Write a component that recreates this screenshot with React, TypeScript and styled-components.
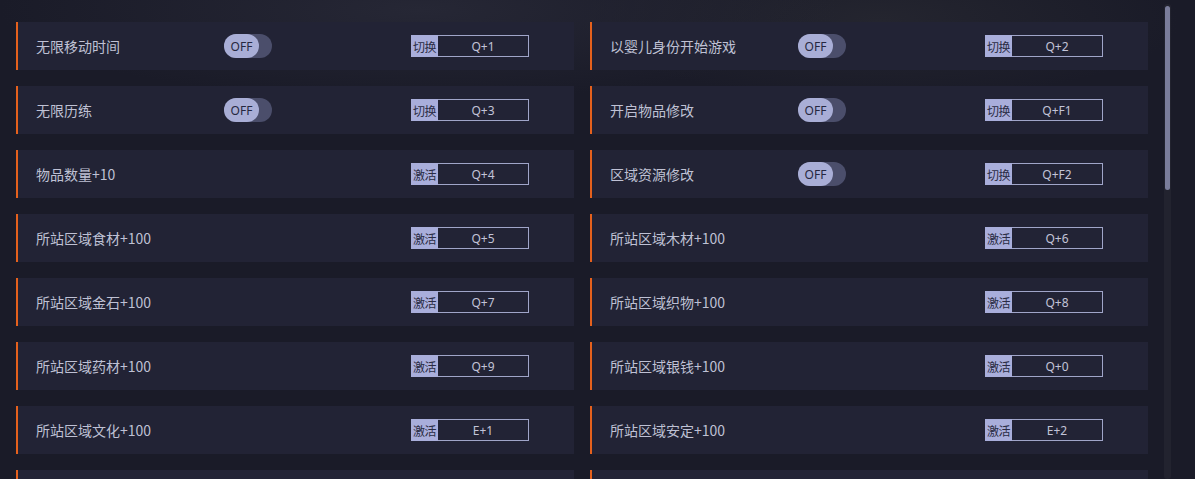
import React from "react";
import styled, { createGlobalStyle } from "styled-components";

const GlobalStyle = createGlobalStyle`
  html, body {
    margin: 0;
    padding: 0;
    background: #1a1b28;
    overflow: hidden;
  }
  body {
    font-family: "Noto Sans CJK SC", "Noto Sans", sans-serif;
  }
`;

const Page = styled("div")`
  position: relative;
  width: 1195px;
  height: 479px;
  overflow: hidden;
  background: radial-gradient(ellipse 420px 90px at 420px 10px, #262735 0%, rgba(26, 27, 40, 0) 100%),
    radial-gradient(ellipse 300px 80px at 880px 20px, #24252f 0%, rgba(26, 27, 40, 0) 100%),
    #1a1b28;
`;

const List = styled("div")`
  display: grid;
  grid-template-columns: 558px 558px;
  column-gap: 16px;
  row-gap: 16px;
  padding: 22px 0 0 16px;
`;

const Row = styled("div")`
  height: 48px;
  display: flex;
  align-items: center;
  background: #222335;
  border-left: 2px solid #e5611d;
  box-sizing: border-box;
`;

const Label = styled("div")`
  width: 188px;
  padding-left: 18px;
  font-size: 14px;
  color: #bfc1d4;
  white-space: nowrap;
`;

const ToggleSlot = styled("div")`
  width: 187px;
  display: flex;
  align-items: center;
`;

const Toggle = styled("div")`
  width: 48px;
  height: 24px;
  border-radius: 12px;
  background: #4b4e6b;
  display: flex;
  align-items: center;
`;

const Knob = styled("div")`
  width: 35px;
  height: 24px;
  border-radius: 12px;
  background: #a9aed6;
  color: #262840;
  font-family: "Noto Sans", sans-serif;
  font-size: 12px;
  display: flex;
  align-items: center;
  justify-content: center;
`;

const Hotkey = styled("div")`
  display: flex;
  height: 22px;
  width: 118px;
`;

const HotkeyType = styled("div")`
  width: 27px;
  background: #a9aedb;
  color: #2a2c44;
  font-size: 12px;
  display: flex;
  align-items: center;
  justify-content: center;
  letter-spacing: -0.5px;
`;

const HotkeyKeys = styled("div")`
  flex: 1;
  border: 1px solid #a0a5c9;
  border-left: none;
  color: #c2c4d8;
  font-family: "Noto Sans", sans-serif;
  font-size: 12px;
  display: flex;
  align-items: center;
  justify-content: center;
  box-sizing: border-box;
`;

const ScrollTrack = styled("div")`
  position: absolute;
  top: 4px;
  right: 24px;
  width: 7px;
  height: 475px;
  background: #22232f;
  border-radius: 3px;
`;

const ScrollThumb = styled("div")`
  margin: 2px auto 0;
  width: 5px;
  height: 184px;
  border-radius: 3px;
  background: #7a7d9b;
`;

type Item = { name: string; toggle?: boolean; keys?: string };

const items: Item[] = [
  { name: "无限移动时间", toggle: true, keys: "Q+1" },
  { name: "以婴儿身份开始游戏", toggle: true, keys: "Q+2" },
  { name: "无限历练", toggle: true, keys: "Q+3" },
  { name: "开启物品修改", toggle: true, keys: "Q+F1" },
  { name: "物品数量+10", keys: "Q+4" },
  { name: "区域资源修改", toggle: true, keys: "Q+F2" },
  { name: "所站区域食材+100", keys: "Q+5" },
  { name: "所站区域木材+100", keys: "Q+6" },
  { name: "所站区域金石+100", keys: "Q+7" },
  { name: "所站区域织物+100", keys: "Q+8" },
  { name: "所站区域药材+100", keys: "Q+9" },
  { name: "所站区域银钱+100", keys: "Q+0" },
  { name: "所站区域文化+100", keys: "E+1" },
  { name: "所站区域安定+100", keys: "E+2" },
  { name: "" },
  { name: "" },
];

const App = () => {
  return (
    <Page>
      <GlobalStyle />
      <List>
        {items.map((item, i) => (
          <Row key={i}>
            <Label>{item.name}</Label>
            <ToggleSlot>
              {item.toggle && (
                <Toggle>
                  <Knob>OFF</Knob>
                </Toggle>
              )}
            </ToggleSlot>
            {item.keys && (
              <Hotkey>
                <HotkeyType>{item.toggle ? "切换" : "激活"}</HotkeyType>
                <HotkeyKeys>{item.keys}</HotkeyKeys>
              </Hotkey>
            )}
          </Row>
        ))}
      </List>
      <ScrollTrack>
        <ScrollThumb />
      </ScrollTrack>
    </Page>
  );
};

export default App;
